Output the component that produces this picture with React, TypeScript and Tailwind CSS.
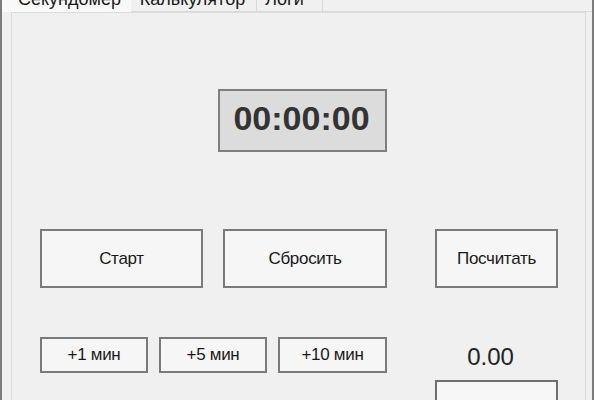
import React from 'react';

const font = { fontFamily: '"Liberation Sans", Arial, sans-serif' };

function Btn({ label, className }: { label: string; className: string }) {
  return (
    <button
      className={`flex items-center justify-center border-2 border-[#7a7a7a] bg-[#f6f6f6] text-[17px] tracking-[-0.3px] text-[#1a1a1a] ${className}`}
    >
      {label}
    </button>
  );
}

export default function App() {
  return (
    <div
      className="w-[594px] h-[400px] overflow-hidden bg-[#f0f0f0] flex flex-col border-l-2 border-r-2 border-[#7c7c7c]"
      style={font}
    >
      {/* tab strip, cut off at the top */}
      <div className="flex h-[12px] shrink-0 text-[18px] text-[#1a1a1a] leading-[20px]">
        <div className="w-[129px] bg-[#f9f9f9] flex justify-center overflow-hidden">
          <span className="-mt-[11px] ml-[6px]">Секундомер</span>
        </div>
        <div className="w-[126px] border-r border-[#d9d9d9] border-b flex justify-center overflow-hidden">
          <span className="-mt-[11px] -ml-[2px]">Калькулятор</span>
        </div>
        <div className="w-[66px] border-r border-[#d9d9d9] border-b flex justify-center overflow-hidden">
          <span className="-mt-[11px] -ml-[10px]">Логи</span>
        </div>
        <div className="flex-1 border-b border-[#d9d9d9]" />
      </div>

      {/* tab page */}
      <div className="flex-1 ml-[9px] mr-[6px] border-l border-r border-t border-[#dcdcdc] bg-[#f0f0f0] pl-[28px] pt-[76px]">
        <div className="ml-[178px] w-[169px] h-[63px] border-2 border-[#7f7f7f] bg-[#dcdcdc] flex items-center justify-center">
          <span className="text-[34px] font-bold text-[#333333] -mt-[4px] -ml-[2px]">00:00:00</span>
        </div>

        <div className="flex mt-[77px]">
          <Btn label="Старт" className="w-[163px] h-[59px]" />
          <Btn label="Сбросить" className="w-[164px] h-[59px] ml-[20px]" />
          <Btn label="Посчитать" className="w-[123px] h-[59px] ml-[48px]" />
        </div>

        <div className="flex mt-[49px] items-start">
          <div className="flex gap-[11px]">
            <Btn label="+1 мин" className="w-[108px] h-[36px]" />
            <Btn label="+5 мин" className="w-[108px] h-[36px]" />
            <Btn label="+10 мин" className="w-[109px] h-[36px]" />
          </div>
          <div className="ml-[48px] w-[123px] flex flex-col">
            <div className="h-[40px] flex items-center justify-center pr-[12px] text-[24px] text-[#222222]">
              0.00
            </div>
            <div className="mt-[3px] h-[40px] border-2 border-[#6f6f6f] bg-[#f7f7f7]" />
          </div>
        </div>
      </div>
    </div>
  );
}
